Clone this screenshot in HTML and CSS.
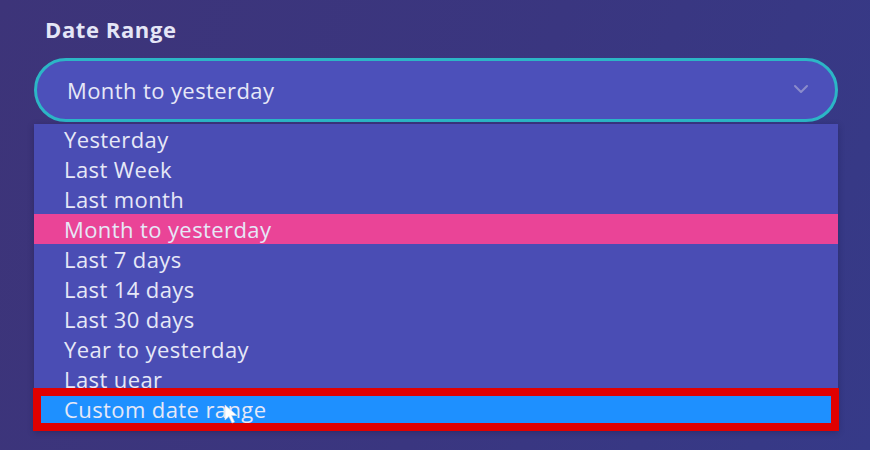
FILE: index.html
```html
<!DOCTYPE html>
<html>
<head>
<meta charset="utf-8">
<link rel="stylesheet" href="styles.css">
</head>
<body>
<div class="panel">
  <div class="label">Date Range</div>
  <div class="field">
    <div class="select">
      <span class="value">Month to yesterday</span>
      <svg class="chev" width="16" height="10" viewBox="0 0 16 10"><path d="M2 2 L8 8 L14 2" fill="none" stroke="#8b8ccb" stroke-width="2" stroke-linecap="round" stroke-linejoin="round"/></svg>
    </div>
    <ul class="menu">
      <li>Yesterday</li>
      <li>Last Week</li>
      <li>Last month</li>
      <li class="active">Month to yesterday</li>
      <li>Last 7 days</li>
      <li>Last 14 days</li>
      <li>Last 30 days</li>
      <li>Year to yesterday</li>
      <li>Last uear</li>
      <li class="hover">Custom date range</li>
    </ul>
    <div class="mark"></div>
    <svg class="cursor" width="16" height="20" viewBox="0 0 16 20"><path d="M1 1 L1 16 L5 12.5 L8 19 L10.5 18 L7.5 11.5 L13 11.5 Z" fill="#ffffff" stroke="#cfd6ea" stroke-width="0.6"/></svg>
  </div>
</div>
</body>
</html>
```
FILE: styles.css
```css
html, body {
  margin: 0;
  padding: 0;
}
body {
  width: 870px;
  height: 450px;
  overflow: hidden;
  background: linear-gradient(110deg, #3d3479 0%, #3a3680 55%, #363a88 100%);
  font-family: "Open Sans", "Noto Sans", sans-serif;
  color: #e8e8f6;
}
.panel {
  padding: 16px 32px 0 34px;
}
.label {
  font-weight: 700;
  font-size: 22px;
  line-height: 26px;
  letter-spacing: 0.6px;
  padding-left: 11px;
  color: #e4e6f6;
  margin-bottom: 16px;
}
.field {
  position: relative;
  width: 804px;
}
.select {
  box-sizing: border-box;
  height: 64px;
  border: 3px solid #2cb6c6;
  border-radius: 32px;
  background: #4c50ba;
  display: flex;
  align-items: center;
  justify-content: space-between;
  padding: 0 26px 0 30px;
}
.value {
  font-size: 22px;
  letter-spacing: 0.4px;
  color: #e6e8f7;
}
.chev {
  margin-top: -2px;
}
.menu {
  list-style: none;
  margin: 2px 0 0 0;
  padding: 0 0 6px 0;
  background: #4a4db4;
  box-shadow: 0 2px 6px rgba(20, 20, 60, 0.35);
}
.menu li {
  height: 30px;
  line-height: 30px;
  font-size: 22px;
  letter-spacing: 0.4px;
  padding-left: 30px;
  color: #e6e8f7;
}
.menu li.active {
  background: #ea4497;
}
.menu li.hover {
  background: #1e90ff;
}
.mark {
  position: absolute;
  left: -1px;
  top: 330px;
  width: 806px;
  height: 43px;
  box-sizing: border-box;
  border: 8px solid #e00000;
}
.cursor {
  position: absolute;
  left: 190px;
  top: 346px;
}
```
